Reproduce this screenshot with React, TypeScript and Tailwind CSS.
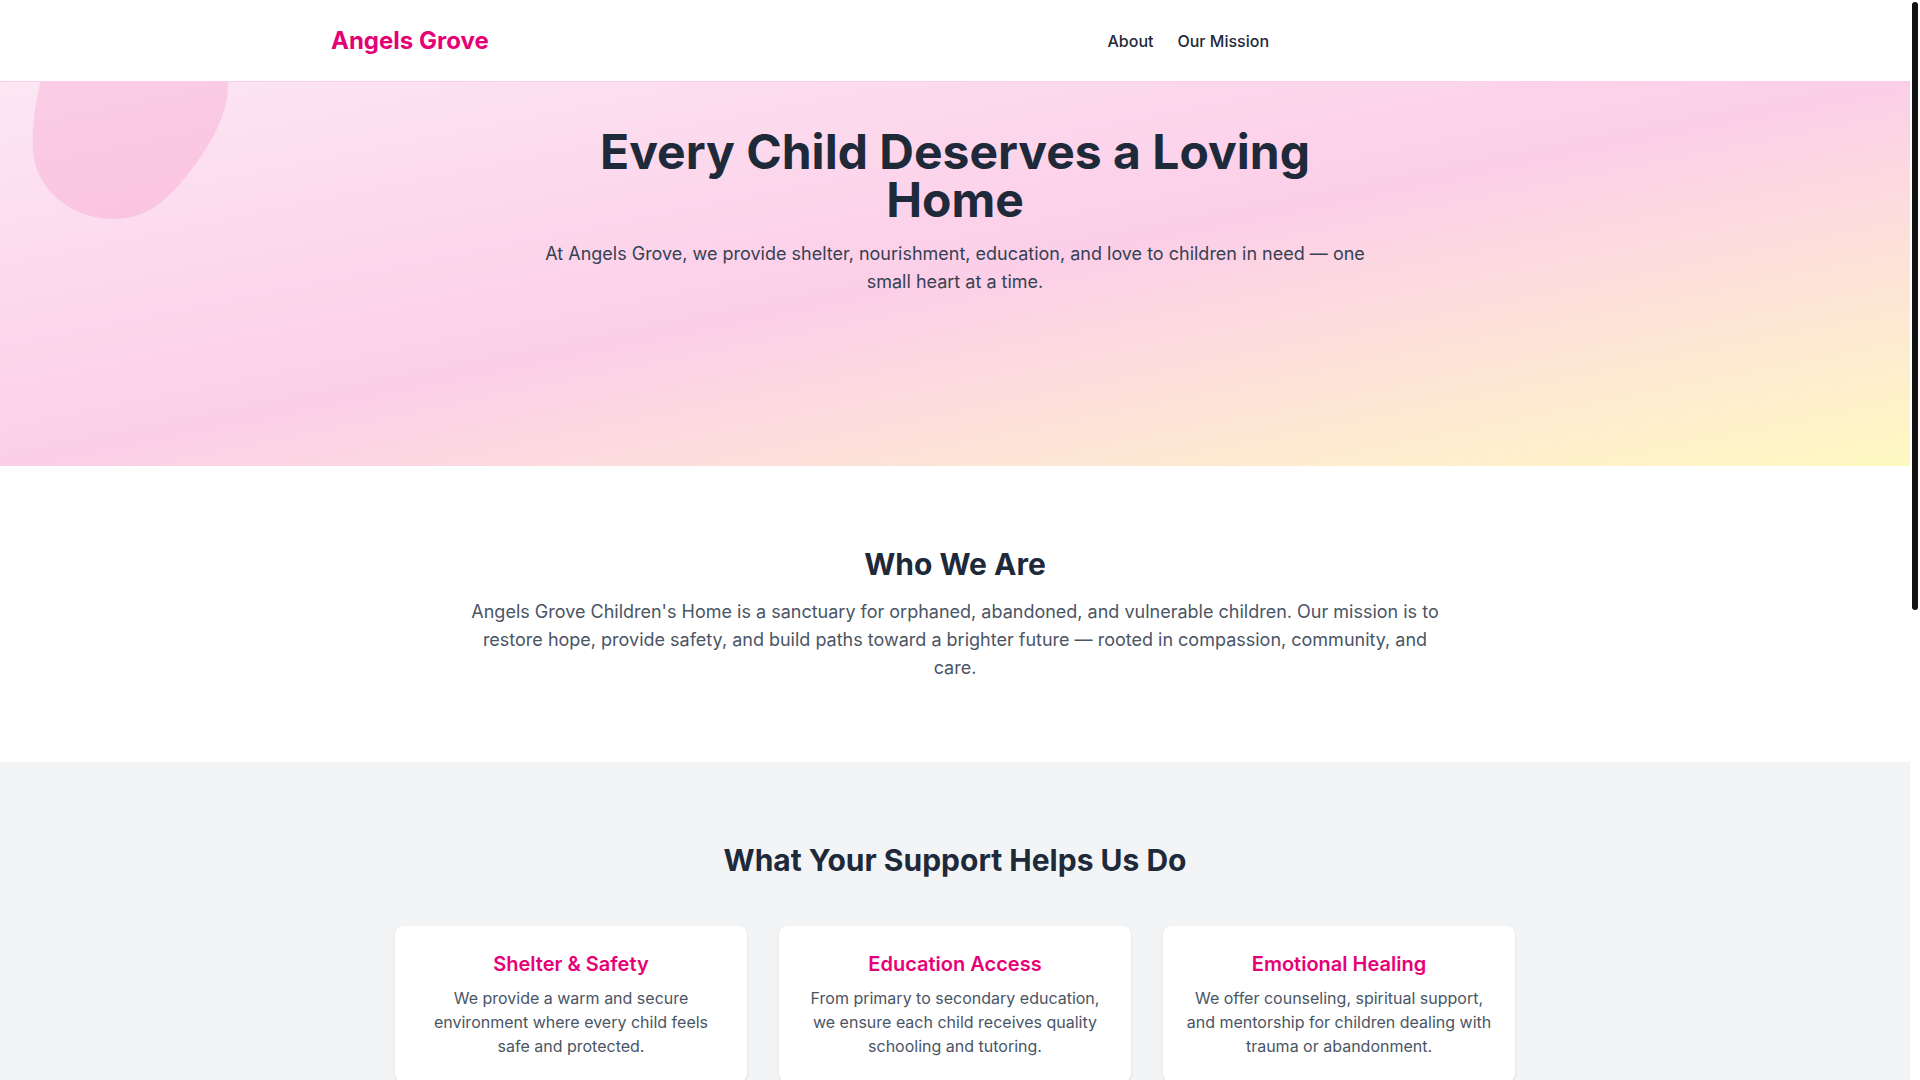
import React from 'react';

interface Service {
  title: string;
  text: string;
}

const services: Service[] = [
  {
    title: 'Shelter & Safety',
    text: 'We provide a warm and secure environment where every child feels safe and protected.',
  },
  {
    title: 'Education Access',
    text: 'From primary to secondary education, we ensure each child receives quality schooling and tutoring.',
  },
  {
    title: 'Emotional Healing',
    text: 'We offer counseling, spiritual support, and mentorship for children dealing with trauma or abandonment.',
  },
];

const ways = [
  { title: 'Donate', text: 'Every gift helps feed, clothe and educate a child in our care.' },
  { title: 'Volunteer', text: 'Share your time and skills with our children and caregivers.' },
  { title: 'Sponsor a Child', text: 'Walk alongside one child with a monthly commitment of love.' },
];

const Header: React.FC = () => (
  <header className="h-[82px] bg-white border-b border-pink-200">
    <div className="max-w-7xl h-full mx-auto px-4 flex items-center">
      <span className="text-2xl font-bold text-pink-600">Angels Grove</span>
      <nav className="ml-auto mr-[310px] flex items-center gap-6 text-base font-medium text-gray-800">
        <a href="#about">About</a>
        <a href="#mission">Our Mission</a>
      </nav>
    </div>
  </header>
);

const Hero: React.FC = () => (
  <section className="relative overflow-hidden h-[384px] bg-gradient-to-br from-pink-100 via-pink-200 to-yellow-100">
    {/* decorative blob */}
    <svg
      className="absolute left-0 top-[-50px]"
      width="240"
      height="200"
      viewBox="0 -50 240 200"
      aria-hidden="true"
    >
      <path
        d="M52 -40 C40 -5 31 35 33 68 C35 108 72 137 113 137 C142 137 160 124 178 104 C202 76 222 46 227 16 C231 -10 222 -32 205 -45 Z"
        fill="#f472b6"
        fillOpacity="0.22"
      />
    </svg>
    <div className="relative max-w-4xl mx-auto px-6 pt-[46px] text-center">
      <h1 className="text-5xl font-bold text-gray-800 mb-4">
        Every Child Deserves a Loving Home
      </h1>
      <p className="text-lg text-gray-700">
        At Angels Grove, we provide shelter, nourishment, education, and love to children in need — one small heart at a time.
      </p>
    </div>
  </section>
);

const About: React.FC = () => (
  <section id="about" className="bg-white py-20">
    <div className="max-w-[980px] mx-auto text-center">
      <h2 className="text-3xl font-bold text-gray-800 mb-4">Who We Are</h2>
      <p className="text-lg text-gray-600">
        Angels Grove Children's Home is a sanctuary for orphaned, abandoned, and vulnerable children. Our mission is to restore hope, provide safety, and build paths toward a brighter future — rooted in compassion, community, and care.
      </p>
    </div>
  </section>
);

const Services: React.FC = () => (
  <section id="mission" className="bg-gray-100 py-20">
    <div className="max-w-6xl mx-auto px-4">
      <h2 className="text-3xl font-bold text-gray-800 text-center mb-12">
        What Your Support Helps Us Do
      </h2>
      <div className="grid grid-cols-3 gap-8">
        {services.map((s) => (
          <div key={s.title} className="bg-white rounded-lg shadow-sm px-[22px] py-6 text-center">
            <h3 className="text-xl font-semibold text-pink-600 mb-2">{s.title}</h3>
            <p className="text-base text-gray-600">{s.text}</p>
          </div>
        ))}
      </div>
    </div>
  </section>
);

const Help: React.FC = () => (
  <section className="bg-white py-20">
    <div className="max-w-6xl mx-auto px-4">
      <h2 className="text-3xl font-bold text-gray-800 text-center mb-12">How You Can Help</h2>
      <div className="grid grid-cols-3 gap-8">
        {ways.map((w) => (
          <div key={w.title} className="rounded-lg border border-pink-100 bg-pink-50 p-6 text-center">
            <h3 className="text-xl font-semibold text-pink-600 mb-2">{w.title}</h3>
            <p className="text-base text-gray-600">{w.text}</p>
          </div>
        ))}
      </div>
    </div>
  </section>
);

const Cta: React.FC = () => (
  <section className="bg-gradient-to-r from-pink-100 to-yellow-100 py-16 text-center">
    <h2 className="text-3xl font-bold text-gray-800 mb-4">Be the Reason a Child Smiles Today</h2>
    <p className="text-lg text-gray-700 mb-8">Your kindness can change a life forever.</p>
    <a href="#donate" className="inline-block rounded-full bg-pink-600 px-8 py-3 text-base font-semibold text-white">
      Donate Now
    </a>
  </section>
);

const Footer: React.FC = () => (
  <footer className="bg-white border-t border-pink-200 py-8 text-center text-sm text-gray-500">
    © 2025 Angels Grove Children's Home. All rights reserved.
  </footer>
);

export default function App() {
  return (
    <div className="bg-white font-['Inter',sans-serif]">
      <main className="mr-[10px]">
        <Header />
        <Hero />
        <About />
        <Services />
        <Help />
        <Cta />
        <Footer />
      </main>
      {/* scrollbar thumb, drawn over the page edge */}
      <div className="fixed right-[2px] top-[2px] w-[6px] h-[608px] rounded-full bg-[#111111]" />
    </div>
  );
}
